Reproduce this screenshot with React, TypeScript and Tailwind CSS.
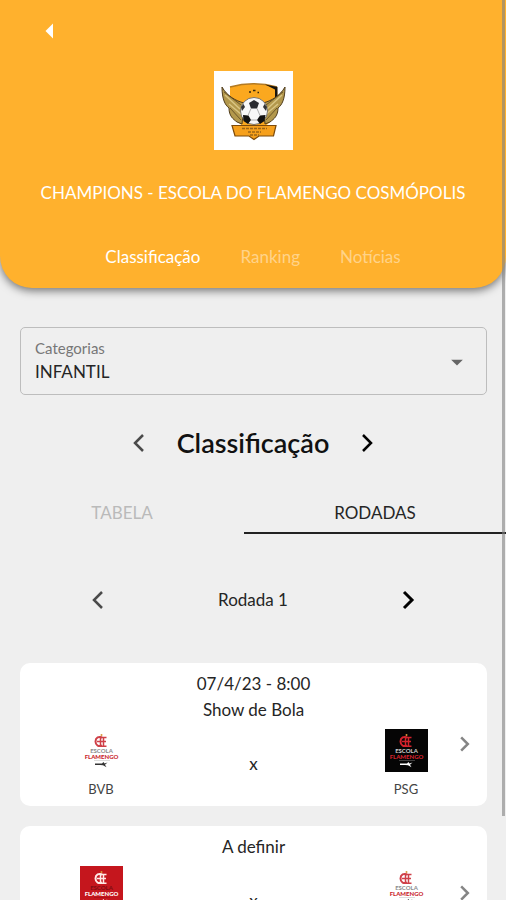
import React from "react";
import { MdArrowDropDown, MdArrowLeft } from "react-icons/md";

type CrestTone = "light" | "dark" | "red";

interface Team {
  name: string;
  tone: CrestTone;
}

interface Match {
  lines: string[];
  home: Team;
  away: Team;
  arrowClass: string;
}

const matches: Match[] = [
  {
    lines: ["07/4/23 - 8:00", "Show de Bola"],
    home: { name: "BVB", tone: "light" },
    away: { name: "PSG", tone: "dark" },
    arrowClass: "mt-0",
  },
  {
    lines: ["A definir"],
    home: { name: "RMA", tone: "red" },
    away: { name: "BVB", tone: "light" },
    arrowClass: "mt-3",
  },
];

const crestColors = {
  light: { bg: "#ffffff", mark: "#cf4048", small: "#8b8b8b", name: "#c9252d", foot: "#333333" },
  dark: { bg: "#050505", mark: "#d3222c", small: "#d0d0d0", name: "#d3222c", foot: "#ffffff" },
  red: { bg: "#c5161d", mark: "#ffe9e6", small: "#7d0d12", name: "#ffffff", foot: "#ffffff" },
};

function Chevron({ direction, className }: { direction: "left" | "right"; className: string }) {
  return (
    <svg viewBox="0 0 36 36" className={className} fill="none" stroke="currentColor" aria-hidden="true">
      <path d={direction === "left" ? "M22 10l-8 8 8 8" : "M14 10l8 8-8 8"} />
    </svg>
  );
}

function SchoolCrest({ tone }: { tone: CrestTone }) {
  const c = crestColors[tone];
  return (
    <svg viewBox="0 0 43 43" className="size-[43px]" aria-hidden="true">
      <rect width="43" height="43" fill={c.bg} />
      <circle cx="21.5" cy="6" r="1" fill="#d79a3c" />
      <g fill="none" stroke={c.mark}>
        <path d="M22 8.500c-3-1.500-6.500 0-6.500 4s3.500 5.500 6.500 4" strokeWidth="2" />
        <path d="M20.500 7.500v10.500M20 8.500h6.500M17 12.500h9M20 17.200h6.500M23.500 8v9" strokeWidth="1.5" />
      </g>
      <text x="21.5" y="23.5" textAnchor="middle" fontSize="6" fontWeight="700" fontFamily="Lato, sans-serif" fill={c.small}>
        ESCOLA
      </text>
      <text x="21.5" y="29.5" textAnchor="middle" fontSize="6" fontWeight="900" fontFamily="Lato, sans-serif" fill={c.name}>
        FLAMENGO
      </text>
      <path d="M14 31.700h16" stroke={c.small} strokeWidth="0.6" opacity="0.6" />
      <path d="M15 34.500h7l1.500-1.500 1 1.500 3-1-2.500 2.300 1.500 2.500-3.500-2-3-.3H15z" fill={c.foot} />
    </svg>
  );
}

function LeagueLogo() {
  return (
    <svg viewBox="0 0 79 79" className="size-[79px] bg-white" role="img" aria-label="Champions">
      <path d="M16 16q23-6.500 47 0l1 20q-1 14-24 26-23-12-24-26z" fill="#fba81f" />
      <path d="M16 16q23-6.500 47 0" fill="none" stroke="#b37a22" strokeWidth="1.5" />
      <path d="M51 13.500l12.500 2.500V25l-2.500 3V18.500z" fill="#17130d" />
      <path d="M8 16c0 12 3 18 7 21 0 8 4 11 8 14l5 2 2-21c-8-2-17-7-22-16z" fill="#b3984c" stroke="#4f3c1c" strokeWidth="1" />
      <path d="M71 16c0 12-3 18-7 21 0 8-4 11-8 14l-5 2-2-21c8-2 17-7 22-16z" fill="#b3984c" stroke="#4f3c1c" strokeWidth="1" />
      <path d="M11 24l15 14M15 33l13 11M68 24L53 38M64 33L51 44" stroke="#d9c583" strokeWidth="1.5" />
      <path d="M10 21l17 13M16 37l11 12M69 21L52 34M63 37L52 49" stroke="#594521" strokeWidth="0.8" />
      <path d="M35 21h2M39 19.500h2.500M43.500 21.500h1.500" stroke="#36260d" strokeWidth="1.5" />
      <circle cx="40" cy="40" r="13.500" fill="#f7f7f7" stroke="#5b5b5b" strokeWidth="0.8" />
      <path d="M35 32l5-3 5 3-2 5.500h-6z" fill="#292b30" />
      <path d="M29 44l5.500.5 2.500 4.500-3 4-4.500-3z" fill="#111" />
      <path d="M51.500 44l-5.500.5-3 4.500 3 4 4.500-3z" fill="#111" />
      <path d="M27 36l2.500-3 1.500 3-3 4zM53 36l-2.500-3-1.500 3 3 4z" fill="#333" />
      <path d="M37 37.500l-3 7M43 37.500l3 7M37 49h6" stroke="#9b9b9b" strokeWidth="0.8" />
      <path d="M18 54.500h44l-2.500 10.500H45l-5 3.500-5-3.500H21z" fill="#f6a01c" stroke="#7c4a0b" strokeWidth="1.2" />
      <path d="M28 57.500h25M34 61h13M36 64h9" stroke="#9c6617" strokeWidth="1.3" strokeDasharray="3 1" />
    </svg>
  );
}

function TeamColumn({ team }: { team: Team }) {
  return (
    <div className="flex w-20 flex-col items-center">
      <SchoolCrest tone={team.tone} />
      <span className="mt-2 text-[13px] leading-[18px] text-[#444]">{team.name}</span>
    </div>
  );
}

function MatchCard({ match }: { match: Match }) {
  return (
    <li className="rounded-[10px] bg-white">
      <a href="#partida" className="flex flex-col pt-2 pb-2">
        {match.lines.map((line) => (
          <span key={line} className="text-center text-[17px] leading-[26px]">
            {line}
          </span>
        ))}
        <div className="mt-[6px] flex items-start pr-1 pl-[41px]">
          <TeamColumn team={match.home} />
          <span className="flex-1 pt-[22px] text-center text-[17px] leading-[26px]">x</span>
          <TeamColumn team={match.away} />
          <div className={match.arrowClass}>
            <Chevron direction="right" className="h-[30px] w-[37px] stroke-3 text-[#858585]" />
          </div>
        </div>
      </a>
    </li>
  );
}

export default function App() {
  return (
    <div className="relative h-screen overflow-hidden bg-[#efefef] font-['Lato',sans-serif] text-[#252525]">
      <div className="h-full overflow-y-auto [scrollbar-width:none]">
        <header className="rounded-b-[32px] bg-[#ffb12d] pb-[19px] text-white shadow-[0_3px_8px_rgba(0,0,0,0.5)]">
          <div className="px-8 pt-[13px]">
            <button type="button" aria-label="Voltar" className="block">
              <MdArrowLeft className="size-9" />
            </button>
          </div>
          <div className="mt-[22px] flex flex-col items-center">
            <LeagueLogo />
            <h1 className="mt-[31px] text-[17px] leading-6">CHAMPIONS - ESCOLA DO FLAMENGO COSMÓPOLIS</h1>
          </div>
          <nav className="mt-10 flex justify-center gap-10 text-[17px] leading-6">
            <a href="#classificacao">Classificação</a>
            <a href="#ranking" className="text-white/45">Ranking</a>
            <a href="#noticias" className="text-white/45">Notícias</a>
          </nav>
        </header>

        <main>
          <div className="relative mr-[19px] ml-5 mt-[39px] rounded-[5px] border border-[#bdbdbd]">
            <label htmlFor="categoria" className="block px-[14px] pt-[11px] text-[15px] leading-[18px] text-[#777]">
              Categorias
            </label>
            <select id="categoria" className="block w-full appearance-none bg-transparent px-[14px] pt-[3px] pb-[10px] text-[17px] leading-6 outline-none">
              <option>INFANTIL</option>
            </select>
            <MdArrowDropDown className="pointer-events-none absolute top-5 right-[15px] size-7 text-[#666]" />
          </div>

          <section className="mt-[30px] flex items-center justify-center gap-5">
            <button type="button" aria-label="Classificação anterior">
              <Chevron direction="left" className="size-9 stroke-[2.5] text-[#4a4a4a]" />
            </button>
            <h2 className="text-[27px] leading-9 font-semibold text-[#111]">Classificação</h2>
            <button type="button" aria-label="Próxima classificação">
              <Chevron direction="right" className="size-9 stroke-[2.5] text-black" />
            </button>
          </section>

          <div role="tablist" className="mt-[31px] grid grid-cols-[244px_1fr] text-[17px] leading-6">
            <button type="button" role="tab" aria-selected="false" className="border-b-2 border-transparent pt-[9px] pb-[7px] text-[#bababa]">
              TABELA
            </button>
            <button type="button" role="tab" aria-selected="true" className="border-b-2 border-[#222] pt-[9px] pb-[7px]">
              RODADAS
            </button>
          </div>

          <section className="mt-12 flex items-center justify-between px-20">
            <button type="button" aria-label="Rodada anterior">
              <Chevron direction="left" className="size-9 stroke-[2.5] text-[#4a4a4a]" />
            </button>
            <h3 className="text-[17px] leading-6">Rodada 1</h3>
            <button type="button" aria-label="Próxima rodada">
              <Chevron direction="right" className="size-9 stroke-3 text-black" />
            </button>
          </section>

          <ul className="mr-[19px] ml-5 mt-[45px] flex flex-col gap-5 pb-5">
            {matches.map((match) => (
              <MatchCard key={match.lines[0]} match={match} />
            ))}
          </ul>
        </main>
      </div>
      <div className="absolute top-0 right-[1px] h-[816px] w-[3px] bg-[#808080]/60" />
    </div>
  );
}
